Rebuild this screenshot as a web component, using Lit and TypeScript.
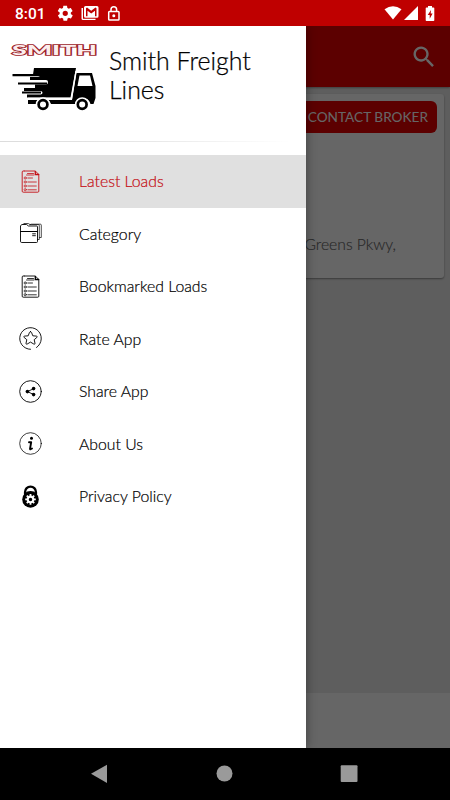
import { LitElement, html, css, svg } from "lit";
import { customElement, state } from "lit/decorators.js";
import { classMap } from "lit/directives/class-map.js";

const listIcon = svg`
  <path d="M6.200 2H5.200Q4.200 2 4.200 3V22.200Q4.200 23.200 5.200 23.200H19.800Q20.800 23.200 20.800 22.200V5.500L17.300 2H6.200"/>
  <path d="M17.300 2.300V5.500H20.600" stroke-width="1.3"/>
  <path d="M9.500 4.500H15.500M8.500 6H16" stroke-width=".8"/>
  <g stroke-width=".7"><circle cx="7.2" cy="9" r="1.100"/><circle cx="7.2" cy="13" r="1.100"/><circle cx="7.2" cy="17" r="1.100"/><circle cx="7.2" cy="20.700" r="1.100"/></g>
  <path d="M9.800 9H14.500M9.800 13H18.300M9.800 17H18.300M9.800 20.800H18.300" stroke-width=".8"/>`;

const icons: Record<string, unknown> = {
  list: listIcon,
  folder: svg`
    <path d="M2.500 9.500V4.700L4 3.500H8.500L10.500 5H18.800Q19.500 5 19.500 6V20.500Q19.500 21.500 18.500 21.500H3.500Q2.500 21.500 2.500 20.500Z"/>
    <path d="M2.500 10.500H19.500" stroke-width="1.100"/>
    <path d="M5.800 3.300V2.500H10.300L12 3.600H20.500Q21.300 3.600 21.300 4.500V18.500H19.700M12 3.600L13.500 3.200H22.500Q23.300 3.200 23.300 4.200V16.500H21.500" stroke-width=".7"/>
    <path d="M14.600 12.800H17.400M14.600 14.700H17.400" stroke-width=".9"/>`,
  star: svg`
    <path d="M12.5 23.300A10.800 10.800 0 1 1 18.500 21.500"/>
    <path d="M12.5 5.600Q13.2 5.600 13.5 6.400L14.8 9.800L18.4 10.100Q19.8 10.400 18.9 11.400L16.2 13.700L17 17.300Q17 18.600 15.9 18.100L12.5 16.100L9.1 18.100Q8 18.600 8 17.300L8.800 13.700L6.1 11.400Q5.2 10.400 6.600 10.100L10.2 9.800L11.5 6.400Q11.8 5.600 12.500 5.600Z"/>`,
  share: svg`
    <circle cx="12.5" cy="12.5" r="10.800"/>
    <path d="M15.500 9.700L9.500 12.600L15.500 15.500"/>
    <g class="solid"><circle cx="15.600" cy="9.600" r="1.800"/><circle cx="9.400" cy="12.600" r="1.800"/><circle cx="15.600" cy="15.600" r="1.800"/></g>`,
  info: svg`
    <circle cx="12.5" cy="12.5" r="10.800" stroke-width=".75"/>
    <circle class="solid" cx="13.500" cy="7.200" r="1.500"/>
    <path d="M11 11.200H13.200L12 17.800Q12 18.800 14 17.500" stroke-width="1.900"/>`,
  lock: svg`
    <path d="M7.100 10V8A5.400 5.400 0 0 1 17.900 8V10" stroke-width="2.400"/>
    <circle class="solid" cx="12.5" cy="15.400" r="8.300"/>
    <g class="white"><circle cx="12.5" cy="15.400" r="2.800" stroke-width="2.100"/>
    <path d="M12.5 10.100V12M12.5 18.800V20.700M7.200 15.400H9M16 15.400H17.800M8.800 11.700L10 12.900M15 17.900L16.200 19.100M8.800 19.100L10 17.900M15 12.900L16.200 11.700" stroke-width="1.800"/></g>`,
};

@customElement("status-bar")
class StatusBar extends LitElement {
  static styles = css`
    :host { display: flex; height: 26px; background: #bf0000; color: #fff; align-items: center; box-sizing: border-box; padding: 0 15.500px 0 15px; }
    .time { font: 500 15.5px/26px Roboto, sans-serif; width: 42px; padding-top: 1px; }
    svg { display: block; fill: #fff; }
    .gear { width: 16.500px; height: 16.500px; }
    .mail { width: 18px; height: 16px; margin-left: 7px; }
    .lock { width: 14px; height: 17px; margin-left: 8px; }
    .right { display: flex; margin-left: auto; align-items: center; gap: 2px; }
    .bat { margin-left: 5px; }
  `;
  render() {
    return html`
      <span class="time">8:01</span>
      <svg class="gear" viewBox="1 1 22 22"><path d="M19.4 13c0-.3.1-.6.1-1s0-.7-.1-1l2.1-1.600c.2-.1.2-.4.1-.6l-2-3.500c-.1-.2-.4-.3-.6-.2l-2.500 1c-.5-.4-1.100-.7-1.700-1l-.4-2.600c0-.2-.2-.4-.5-.4h-4c-.2 0-.4.2-.5.4l-.4 2.600c-.6.3-1.200.6-1.700 1l-2.500-1c-.2-.1-.5 0-.6.2l-2 3.500c-.1.2-.1.500.1.600L4.600 11c-.1.3-.1.700-.1 1s0 .700.1 1l-2.100 1.600c-.2.1-.2.400-.1.600l2 3.500c.1.200.4.300.6.200l2.500-1c.5.400 1.100.7 1.700 1l.4 2.600c0 .200.200.400.500.400h4c.2 0 .4-.2.5-.4l.4-2.600c.6-.3 1.200-.6 1.700-1l2.500 1c.2.100.5 0 .6-.200l2-3.500c.1-.2.1-.5-.1-.6zM12 15.500a3.500 3.500 0 1 1 0-7 3.500 3.500 0 0 1 0 7z"/></svg>
      <svg class="mail" viewBox="0 0 18 16"><path d="M.5 3H2V13.700H14.500V15H2Q.5 15 .5 13.500Z"/><path fill-rule="evenodd" d="M4.500 1H16Q17.500 1 17.500 2.500V11.200Q17.500 12.700 16 12.700H4.500Q3 12.700 3 11.200V2.500Q3 1 4.500 1ZM5 3.300V11.200H6.500V5.800L10.200 8.500L14 5.800V11.200H15.500V3.300L14.500 2.500L10.200 5.700L6 2.500Z"/></svg>
      <svg class="lock" viewBox="0 0 14 17"><path fill="none" stroke="#fff" stroke-width="1.500" d="M4 6.500V4.500A2.800 2.800 0 0 1 9.600 4.500V6.500M2.500 6.500H11.200Q12 6.500 12 7.300V14.200Q12 15 11.200 15H2.500Q1.700 15 1.700 14.200V7.300Q1.700 6.500 2.500 6.500Z"/><circle cx="6.800" cy="10.800" r="1.500"/></svg>
      <div class="right">
        <svg width="18" height="14" viewBox="0 0 18 14"><path d="M.5 3.300Q9-2.600 17.500 3.300L9 13.500Z"/></svg>
        <svg width="14" height="14" viewBox="0 0 14 14"><path d="M14 0V14H0Z"/></svg>
        <svg class="bat" width="10" height="15" viewBox="0 0 10 15"><path fill-rule="evenodd" d="M3 0H7V1.500H8.500Q9.300 1.500 9.300 2.300V14.200Q9.300 15 8.500 15H1.500Q.7 15 .7 14.200V2.300Q.7 1.500 1.500 1.500H3ZM6 4L2.700 9H4.700V12.700L7.600 7.500H5.700Z"/></svg>
      </div>`;
  }
}

@customElement("loads-page")
class LoadsPage extends LitElement {
  static styles = css`
    :host { display: flex; flex-direction: column; height: 100%; background: #ebebeb; font-family: Lato, sans-serif; }
    .bar { height: 61px; flex: none; background: #e60000; display: flex; align-items: center; justify-content: flex-end; padding-right: 12px; box-sizing: border-box; box-shadow: 0 1px 2px #0005; }
    .card { margin: 7px 6px 0; height: 184px; background: #fff; border-radius: 3px; box-shadow: 0 1px 2px #0006; display: flex; flex-direction: column; align-items: flex-end; justify-content: space-between; box-sizing: border-box; padding: 6.500px 7px 23px; }
    .contact { height: 32.500px; width: 146px; box-sizing: border-box; padding-right: 9px; border-radius: 6px; background: #e60000; color: #fff; font-size: 13.650px; line-height: 32px; text-align: right; white-space: nowrap; }
    .addr { color: #666; font-size: 15.700px; font-weight: 300; -webkit-text-stroke: .15px; line-height: 22px; margin-right: 41px; }
    .foot { height: 55px; margin-top: auto; background: #fff; }
  `;
  render() {
    return html`
      <div class="bar">
        <svg width="28" height="28" viewBox="0 0 24 24" fill="#fff"><path d="M15.500 14h-.790l-.280-.270A6.500 6.500 0 1 0 13.730 14.430l.270.280v.790l5 4.990L20.490 19zM9.500 14a4.500 4.500 0 1 1 0-9 4.500 4.500 0 0 1 0 9z"/></svg>
      </div>
      <div class="card">
        <div class="contact">CONTACT BROKER</div>
        <div class="addr">Greens Pkwy,</div>
      </div>
      <div class="foot"></div>`;
  }
}

@customElement("nav-drawer")
class NavDrawer extends LitElement {
  @state() private selected = 0;
  private items = [
    ["list", "Latest Loads"],
    ["folder", "Category"],
    ["list", "Bookmarked Loads"],
    ["star", "Rate App"],
    ["share", "Share App"],
    ["info", "About Us"],
    ["lock", "Privacy Policy"],
  ];
  static styles = css`
    :host { display: flex; flex-direction: column; width: 306px; height: 100%; background: #fff; font-family: Lato, sans-serif; color: #000; box-shadow: 0 0 10px #0006; }
    header { display: flex; height: 115px; box-sizing: border-box; padding: 13px 0 0 8px; gap: 8px; flex: none; }
    .logo { width: 93px; height: 76px; flex: none; }
    .word { font: 900 14px Lato, sans-serif; fill: #fbeeee; stroke: #9d2228; stroke-width: 1.700px; paint-order: stroke; }
    h1 { margin: 6.500px 0 0; font-size: 24.900px; line-height: 29px; font-weight: 300; width: 160px; -webkit-text-stroke: .25px #000; }
    .rule { height: 1px; flex: none; background: linear-gradient(90deg, #dcdcdc, #e8e8e8 50%, #fff 95%); }
    nav { padding-top: 13px; }
    .item { height: 52.500px; display: flex; align-items: center; font-size: 15.800px; font-weight: 300; padding-left: 18px; gap: 36px; box-sizing: border-box; -webkit-text-stroke: .2px; cursor: pointer; }
    .item span { margin-top: -1px; }
    .active { background: #e0e0e0; color: #c40d14; }
    .icon { width: 25px; height: 25px; fill: none; stroke: currentColor; stroke-width: .9; stroke-linecap: round; stroke-linejoin: round; }
    .solid { fill: currentColor; stroke: none; }
    .white { stroke: #fff; stroke-linecap: butt; }
  `;
  render() {
    return html`
      <header>
        <svg class="logo" viewBox="-2 -4 93 76">
          <text class="word" x="2" y="12.300" textLength="85" lengthAdjust="spacingAndGlyphs">SMITH</text>
          <path d="M24 25H66L60.500 54.500H17V51.500H30.500Q32.500 51.500 32.500 49.700Q32.500 48 30.500 48H14V45H25V41.500H36Q38 41.500 38 39Q38 37 36 37H20V34H28Q30 34 30 31.500H23Z"/>
          <path d="M2.500 32.200H32M8 40.500H37M12 49.500H31" fill="none" stroke="#000" stroke-width="2.200"/>
          <path d="M18 57H62L66.500 30H82L85.500 43V55L83.500 61H80.500A8 8 0 0 0 65 61H41A8 8 0 0 0 26 61H18Z"/>
          <path fill="#fff" d="M69.500 32.500H80L82.500 43H67.500Z"/>
          <path d="M66 28L61.500 55.500H18" stroke="#fff" stroke-width="1.300" fill="none"/>
          <g fill="#fff" stroke="#fff" stroke-width="2"><circle cx="33" cy="61.500" r="6.300"/><circle cx="72.200" cy="61.500" r="6.300"/></g>
          <g fill="#fff" stroke="#000" stroke-width="2.700"><circle cx="33" cy="61.500" r="4.400"/><circle cx="72.200" cy="61.500" r="4.400"/></g>
        </svg>
        <h1>Smith Freight Lines</h1>
      </header>
      <div class="rule"></div>
      <nav>
        ${this.items.map(
          ([icon, label], i) => html`
            <div class=${classMap({ item: true, active: i === this.selected })} @click=${() => (this.selected = i)}>
              <svg class="icon" viewBox="0 0 25 25">${icons[icon]}</svg>
              <span>${label}</span>
            </div>`
        )}
      </nav>`;
  }
}

@customElement("app-root")
class AppRoot extends LitElement {
  static styles = css`
    :host { display: flex; flex-direction: column; width: 450px; height: 800px; overflow: hidden; }
    .stage { position: relative; flex: 1; overflow: hidden; }
    .scrim { position: absolute; inset: 0; background: rgba(0, 0, 0, .6); }
    nav-drawer { position: absolute; left: 0; top: 0; }
    .keys { height: 52px; background: #000; display: flex; align-items: center; justify-content: space-between; padding: 0 92px 0 90px; box-sizing: border-box; fill: #9a9a9a; }
  `;
  render() {
    return html`
      <status-bar></status-bar>
      <div class="stage">
        <loads-page></loads-page>
        <div class="scrim"></div>
        <nav-drawer></nav-drawer>
      </div>
      <div class="keys">
        <svg width="18" height="20" viewBox="0 0 18 20"><path d="M1 9.800L17 .7V19Z"/></svg>
        <svg width="18" height="18" viewBox="0 0 18 18"><circle cx="9.500" cy="8.500" r="8"/></svg>
        <svg width="18" height="18" viewBox="0 0 18 18"><rect x=".7" y=".2" width="16.800" height="16.700" rx="1"/></svg>
      </div>`;
  }
}
